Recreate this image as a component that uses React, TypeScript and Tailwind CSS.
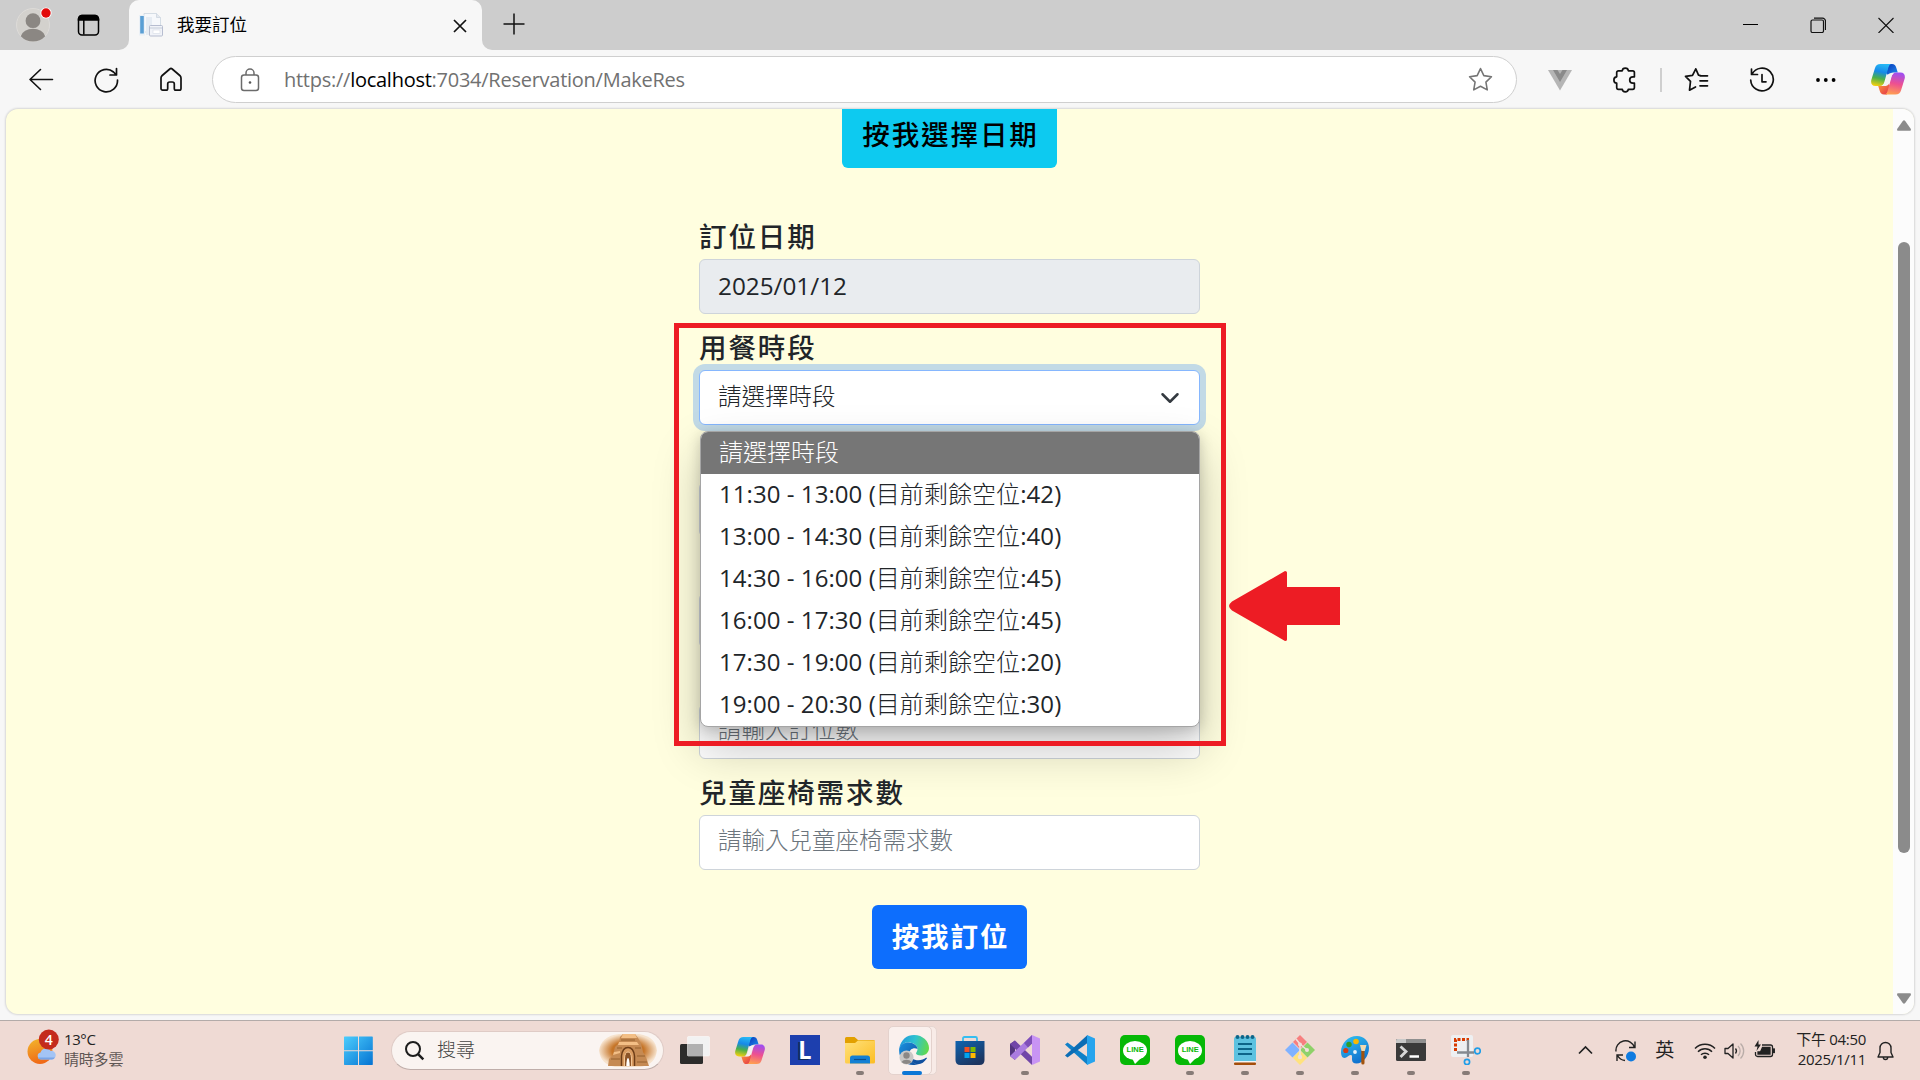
import React from "react";

const UI = "font-['Open_Sans','Noto_Sans_CJK_TC',sans-serif]";

function Copilot({ size, id }: { size: number; id: string }) {
  return (
    <svg width={size} height={size * 0.9} viewBox="0 0 34 30.6">
      <defs>
        <linearGradient id={id + "a"} x1="0.5" y1="0" x2="0.3" y2="1">
          <stop offset="0" stopColor="#26b8f5" />
          <stop offset="0.35" stopColor="#1789e8" />
          <stop offset="0.65" stopColor="#4bb04a" />
          <stop offset="1" stopColor="#f3cf10" />
        </linearGradient>
        <linearGradient id={id + "b"} x1="0.6" y1="0" x2="0.4" y2="1">
          <stop offset="0" stopColor="#a04ef0" />
          <stop offset="0.5" stopColor="#ee5090" />
          <stop offset="1" stopColor="#ffa050" />
        </linearGradient>
        <linearGradient id={id + "c"} x1="0" y1="0" x2="1" y2="1">
          <stop offset="0" stopColor="#0a35b8" />
          <stop offset="1" stopColor="#1e90f0" />
        </linearGradient>
        <linearGradient id={id + "d"} x1="0" y1="0" x2="1" y2="1">
          <stop offset="0" stopColor="#ff9a3c" />
          <stop offset="1" stopColor="#e22f4a" />
        </linearGradient>
      </defs>
      <path d="M18 0h3c2.500 0 3.500 1.200 4.200 3.500l1.600 5h-4.300c-2.500 0-4 1-5 3L15 9z" fill={`url(#${id}c)`} />
      <path d="M16 30.600h-3c-2.500 0-3.500-1.200-4.200-3.500L7.200 22h4.300c2.500 0 4-1 5-3L19 21.600z" fill={`url(#${id}d)`} />
      <path d="M9.500 0H21c-2 0-3 1.500-3.600 3.500L13.500 17.500c-.8 2.800-2 4.500-5 4.500H4.500C.8 22-.4 19.300.3 16L4 4C4.800 1.400 6.500 0 9.500 0z" fill={`url(#${id}a)`} />
      <path d="M24.500 30.600H13c2 0 3-1.500 3.600-3.500L20.500 13.100c.8-2.800 2-4.500 5-4.500h4c3.700 0 4.900 2.700 4.200 6L30 26.600c-.8 2.600-2.500 4-5.500 4z" fill={`url(#${id}b)`} />
      <path d="M18.500 9.500h4l-1.500 1.500q-.7 1-1.200 2.700L18.200 19q-.9 3-3.200 3h-3.500l1.500-1.500q.8-1 1.200-2.600l1.600-5.400q.8-2.600 2.700-3z" fill="#f5f1f2" />
    </svg>
  );
}

function TabStrip() {
  return (
    <div className="flex h-[50px] bg-[#cdcdcd]">
      <div className="flex w-[119px] items-center pl-4">
        <svg width="36" height="50" viewBox="0 0 36 50">
          <circle cx="17" cy="25" r="16.500" fill="#d3d1cd" stroke="#dddbd8" />
          <circle cx="17" cy="20.700" r="7.400" fill="#8b8783" />
          <path d="M4.800 36.200a12.500 9.500 0 0 1 24.400 0A16.500 16.500 0 0 1 4.800 36.200z" fill="#8b8783" />
          <circle cx="30" cy="13" r="5.600" fill="#fff" />
          <circle cx="30" cy="13" r="4.700" fill="#e30b0b" />
        </svg>
        <svg className="ml-[24px]" width="24" height="24" viewBox="0 0 24 24" fill="none" stroke="#000" strokeWidth="1.500">
          <rect x="2.500" y="2.500" width="20" height="19.500" rx="3.500" />
          <path d="M2.500 7V6A3.500 3.500 0 0 1 6 2.500h13A3.500 3.500 0 0 1 22.500 6v1z" fill="#000" />
          <path d="M7.800 7v14.500" />
        </svg>
      </div>
      <svg className="mt-auto" width="10" height="10"><path d="M10 0A10 10 0 0 1 0 10h10z" fill="#f7f7f7" /></svg>
      <div className="flex w-[353px] items-center rounded-t-[10px] bg-[#f7f7f7] pl-[9px] pr-3">
        <svg width="26" height="26" viewBox="0 0 26 26">
          <path d="M6 1.500h12.500l4 4V20H6z" fill="#f6f8fb" stroke="#cdd6e0" strokeWidth=".8" />
          <path d="M18.500 1.500v4h4" fill="#e3e8ee" stroke="#cdd6e0" strokeWidth=".8" />
          <rect x="1" y="3" width="6" height="20.500" fill="#eaf0f6" />
          <rect x="2.200" y="4" width="3.600" height="17.500" fill="#5a9fd4" />
          <path d="M8 5h6v18H8z" fill="#e6ecf3" />
          <rect x="11.500" y="13.500" width="13" height="10.500" rx="1" fill="#f1f3f8" stroke="#b0b7cb" strokeWidth=".9" />
          <path d="M12 16h12" stroke="#c3cbd8" />
          <rect x="15" y="18" width="7" height="3.500" fill="#fff" stroke="#d5dae4" strokeWidth=".6" />
        </svg>
        <span className={`ml-[13px] pb-[1px] text-[17.500px] leading-none text-black ${UI}`}>我要訂位</span>
        <svg className="ml-auto mt-[2px]" width="20" height="20" viewBox="0 0 20 20" stroke="#111" strokeWidth="1.700"><path d="M4 4l12 12M16 4L4 16" /></svg>
      </div>
      <svg className="mt-auto" width="10" height="10"><path d="M0 0A10 10 0 0 0 10 10H0z" fill="#f7f7f7" /></svg>
      <svg className="ml-[11px] mt-[13px]" width="22" height="22" viewBox="0 0 22 22" stroke="#111" strokeWidth="1.500"><path d="M11 .5v21M.5 11h21" /></svg>
      <div className="ml-auto flex w-[178px] items-start justify-between pl-[1px] pr-[26px] pt-[17px]">
        <svg width="15" height="16" viewBox="0 0 15 16"><path d="M0 7.500h15" stroke="#000" /></svg>
        <svg width="16" height="16" viewBox="0 0 16 16" fill="none" stroke="#111" strokeWidth="1.200">
          <rect x="1" y="3" width="12.500" height="12.500" rx="1.500" />
          <path d="M4 1.200h8.500a3 3 0 0 1 3 3V13" />
        </svg>
        <svg width="16" height="16" viewBox="0 0 16 16" stroke="#111" strokeWidth="1.100"><path d="M.5 1l15 15M15.500 1l-15 15" /></svg>
      </div>
    </div>
  );
}

function Toolbar() {
  return (
    <div className="flex h-[59px] items-center bg-[#f7f7f7]">
      <svg className="ml-7" width="26" height="26" viewBox="0 0 26 26" fill="none" stroke="#111" strokeWidth="1.600" strokeLinecap="round" strokeLinejoin="round">
        <path d="M12.500 2.500L2 12.500l10.500 10M2 12.500h22.500" />
      </svg>
      <svg className="ml-[39px]" width="26" height="26" viewBox="0 0 26 26" fill="none" stroke="#111" strokeWidth="1.700" strokeLinecap="round" strokeLinejoin="round">
        <path d="M24.500 13A11.200 11.200 0 1 1 20.500 5l2.800 2.800M23.500 1.500v6.500H17" />
      </svg>
      <svg className="ml-[40px]" width="24" height="28" viewBox="0 0 24 28" fill="none" stroke="#111" strokeWidth="1.700" strokeLinejoin="round">
        <path d="M2 12c0-1 .4-1.800 1.200-2.500l7.600-6.500c.7-.6 1.700-.6 2.400 0l7.600 6.500c.8.700 1.200 1.500 1.200 2.500v10.500c0 1-.7 1.700-1.700 1.700h-3.400c-1 0-1.600-.7-1.600-1.700V18a2 2 0 0 0-2-2h-2.600a2 2 0 0 0-2 2v4.500c0 1-.6 1.700-1.600 1.700H3.700C2.700 24.200 2 23.500 2 22.500z" />
      </svg>
      <div className="ml-[29px] flex h-[47px] w-[1305px] items-center rounded-full border-[1.500px] border-[#cfcfcf] bg-white pl-[27px] pr-[23px]">
        <svg width="20" height="24" viewBox="0 0 20 24" fill="none" stroke="#6b6b6b" strokeWidth="1.500">
          <rect x="1.500" y="7" width="17" height="15.500" rx="2.500" />
          <path d="M6 7V5a4 4 0 0 1 8 0v2" />
          <circle cx="10" cy="14.500" r="1.300" fill="#555" stroke="none" />
        </svg>
        <span className={`ml-[24px] text-[20px] leading-none tracking-[-0.260px] text-[#717171] ${UI}`}>
          https://<span className="text-black">localhost</span>:7034/Reservation/MakeRes
        </span>
        <svg className="ml-auto" width="25" height="25" viewBox="0 0 24 24" fill="none" stroke="#757575" strokeWidth="1.500" strokeLinejoin="round">
          <path d="M12 1.500l3.200 6.800 7.300 1-5.300 5.200 1.300 7.500L12 18.500 5.500 22l1.300-7.500L1.500 9.300l7.300-1z" />
        </svg>
      </div>
      <svg className="ml-[31px]" width="24" height="22" viewBox="0 0 24 22">
        <path d="M0 1h24L12 21.500z" fill="#b5b5b5" />
        <path d="M5 1h4.500L12 5l2.500-4H19l-7 12z" fill="#8a8a8a" />
      </svg>
      <svg className="ml-[41px]" width="26" height="26" viewBox="0 0 26 26" fill="none" stroke="#111" strokeWidth="1.700" strokeLinejoin="round">
        <path d="M3.700 5.500A1.700 1.700 0 0 1 5.400 3.800h3.900C9.400 2.300 10.500 1.200 12.300 1.200s2.900 1.100 3 2.600h4.400c1 0 1.700.7 1.700 1.700v4.300h-1.500a3.200 3.200 0 0 0 0 6.400h1.500v4.400c0 1-.7 1.700-1.700 1.700h-4.400c-.1 1.500-1.200 2.600-3 2.600s-2.900-1.100-3-2.600H5.400c-1 0-1.700-.7-1.700-1.700v-4.400C2 16.100.9 14.900.9 13s1.100-3.100 2.800-3.200z" />
      </svg>
      <div className="ml-[21px] h-6 w-[2px] bg-[#cfcfcf]" />
      <svg className="ml-[22px]" width="25" height="25" viewBox="0 0 25 25" fill="none" stroke="#111" strokeWidth="1.700" strokeLinejoin="round" strokeLinecap="round">
        <path d="M16.500 8.500l-2-.3L11.800 1.800 8.500 8.300l-7 1 5 5-1 8.900 6-3.200M16 8.800h7.500M16 13.800h7.500M16 18.800h7.500" />
      </svg>
      <svg className="ml-[40px]" width="26" height="26" viewBox="0 0 26 26" fill="none" stroke="#111" strokeWidth="1.700" strokeLinecap="round" strokeLinejoin="round">
        <path d="M2.500 2v5.500h6M3 7.200A11.300 11.300 0 1 1 1.700 13M13 7.500v7.300h4" />
      </svg>
      <svg className="ml-[41px]" width="20" height="6" viewBox="0 0 20 6"><circle cx="2" cy="3" r="1.900" /><circle cx="9.800" cy="3" r="1.900" /><circle cx="17.600" cy="3" r="1.900" /></svg>
      <div className="ml-[35px]"><Copilot size={34} id="tb" /></div>
    </div>
  );
}

const slots = [
  { time: "11:30 - 13:00", left: 42 },
  { time: "13:00 - 14:30", left: 40 },
  { time: "14:30 - 16:00", left: 45 },
  { time: "16:00 - 17:30", left: 45 },
  { time: "17:30 - 19:00", left: 20 },
  { time: "19:00 - 20:30", left: 30 },
];

function Field({ label, children }: { label?: string; children: React.ReactNode }) {
  return (
    <div className="flex h-[111.200px] flex-col">
      <div className="flex h-[56.200px] items-center pt-[11px] text-[27.500px] font-medium leading-none tracking-[1.900px] text-[#212529]">{label}</div>
      {children}
    </div>
  );
}

const box = "flex h-[55px] items-center rounded-[6px] border pb-[2px] pl-[18px] pr-[19px] text-[23.500px] leading-none";

function Page() {
  return (
    <div className="relative mx-[6px] flex h-[905px] overflow-hidden rounded-[12px] bg-[#fffedf] shadow-[0_0_2px_1px_rgba(0,0,0,0.13)]">
      <div className={`flex flex-1 flex-col items-center ${UI}`}>
        <div className="flex h-[59px] w-[215px] items-center justify-center rounded-b-[6px] bg-[#0dcaf0] pb-[8px] pl-[2px] text-[27.500px] font-medium leading-none tracking-[1.900px] text-black">
          按我選擇日期
        </div>
        <div className="mt-[35px] w-[501px]">
          <Field label="訂位日期"><div className={`${box} border-[#ced4da] bg-[#e9ecef] text-[#212529]`}><span className="text-[24.300px]">2025/01/12</span></div></Field>
          <Field label="用餐時段">
            <div className={`${box} justify-between border-[#86b7fe] bg-white font-light text-[#212529] shadow-[0_0_0_6px_rgba(13,110,253,0.25)]`}>
              請選擇時段
              <svg className="mt-[2px]" width="20" height="20" viewBox="0 0 16 16" fill="none" stroke="#343a40" strokeWidth="2" strokeLinecap="round" strokeLinejoin="round"><path d="M2 5l6 6 6-6" /></svg>
            </div>
          </Field>
          <Field><div className={`${box} border-[#ced4da] bg-white`} /></Field>
          <Field><div className={`${box} border-[#ced4da] bg-white`} /></Field>
          <Field><div className={`${box} border-[#ced4da] bg-white pb-[4px] font-light text-[#6c757d]`}>請輸入訂位數</div></Field>
          <div className="relative z-20">
            <Field label="兒童座椅需求數"><div className={`${box} border-[#ced4da] bg-white pb-[3px] font-light text-[#6c757d]`}>請輸入兒童座椅需求數</div></Field>
          </div>
        </div>
        <div className="mt-[35px] flex h-[64px] w-[155px] items-center justify-center rounded-[6px] bg-[#0d6efd] pl-[2px] text-[27.500px] font-bold leading-none tracking-[1.900px] text-white">
          按我訂位
        </div>
      </div>
      <div className="flex w-[21px] flex-col items-center bg-[#fcfcfc]">
        <svg className="mt-[11px]" width="14" height="11" viewBox="0 0 14 11"><path d="M5.800 1a1.500 1.500 0 0 1 2.400 0l5.500 7.800c.6 1 .1 2-1 2H1.300c-1.100 0-1.600-1-1-2z" fill="#8b8b8b" /></svg>
        <div className="mt-[111px] h-[611px] w-3 rounded-full bg-[#8b8b8b]" />
        <svg className="mb-[10px] mt-auto" width="14" height="11" viewBox="0 0 14 11"><path d="M5.800 10a1.500 1.500 0 0 0 2.400 0l5.500-7.800c.6-1 .1-2-1-2H1.300c-1.100 0-1.600 1-1 2z" fill="#8b8b8b" /></svg>
      </div>

      <div className={`absolute left-[694px] top-[322px] z-10 h-[296px] w-[500px] rounded-[8px] border border-[#a5a5a5] bg-white text-[24px] leading-none text-[#212529] shadow-[0_22px_48px_rgba(0,0,0,0.22),0_3px_14px_rgba(0,0,0,0.18)] ${UI}`}>
        <div className="flex h-[42px] items-center rounded-t-[7px] bg-[#767676] pb-[2px] pl-[18px] font-light text-white">請選擇時段</div>
        {slots.map((s) => (
          <div key={s.time} className="flex h-[42px] items-center whitespace-pre pb-[3px] pl-[18px] tracking-[0.060px]">
            {s.time} (<span className="pt-[1px] font-light">目前剩餘空位</span>:{s.left})
          </div>
        ))}
      </div>
      <div className="absolute left-[668px] top-[214px] z-30 h-[423px] w-[552px] border-[5px] border-[#ed1c24]" />
      <svg className="absolute left-[1223px] top-[462px] z-30" width="111" height="70" viewBox="0 0 111 70"><path d="M0 35q0-2 3-4.500L56 0q2 0 2 1.500V16h53v38H58v14.500q0 1.500-2 1.500L3 39.500Q0 37 0 35z" fill="#ed1c24" /></svg>
    </div>
  );
}

function Cell({ children, run }: { children: React.ReactNode; run?: boolean }) {
  return (
    <div className="relative flex h-[59px] w-[55.080px] shrink-0 items-center justify-center pb-[1px]">
      {children}
      {run && <span className="absolute bottom-[5px] h-[4px] w-2 rounded-full bg-[#877b77]" />}
    </div>
  );
}

function Line() {
  return (
    <div className="flex h-[30px] w-[30px] items-center justify-center rounded-[5px] bg-[#06b806]">
      <div className="relative flex h-[19px] w-[24px] items-center justify-center rounded-[50%] bg-white">
        <span className="font-['Liberation_Sans',sans-serif] text-[7.500px] font-bold leading-none text-[#06b806]">LINE</span>
        <svg className="absolute left-[9px] top-[17px]" width="9" height="7"><path d="M0 0h9L3 6z" fill="#fff" /></svg>
      </div>
    </div>
  );
}

function Taskbar() {
  return (
    <div className={`flex h-[60px] items-center border-t border-[#b3aba9] bg-[#efdad4] ${UI}`}>
      <div className="flex w-[344px] items-center pl-[26px]">
        <svg className="mb-[5px]" width="34" height="38" viewBox="0 0 34 38">
          <defs><linearGradient id="sun" x1="0" y1="0" x2="0.300" y2="1"><stop offset="0" stopColor="#f2b72c" /><stop offset="1" stopColor="#f06a17" /></linearGradient></defs>
          <circle cx="14" cy="22.500" r="12.500" fill="url(#sun)" />
          <path d="M15 30.500a3.600 3.600 0 0 1-.5-7.100 5.800 5.800 0 0 1 10.300-1.500 4.300 4.300 0 0 1 1.200 8.600z" fill="#a3c4f5" />
          <path d="M12 28.500h17a4 4 0 0 1-3 2H15a4 4 0 0 1-3-2z" fill="#7aa5e8" />
          <circle cx="22.800" cy="10.500" r="10" fill="#c42b1c" />
          <text x="22.800" y="15.500" textAnchor="middle" fontSize="14" fill="#fff" fontWeight="600">4</text>
        </svg>
        <div className="mb-[3px] ml-[4px] text-[15px] leading-[20px]">
          <div className="tracking-[-0.400px] text-[#222]">13°C</div>
          <div className="tracking-[-0.200px] text-[#5f5754]">晴時多雲</div>
        </div>
      </div>
      <svg width="30" height="30" viewBox="0 0 30 30">
        <defs><linearGradient id="win" x1="0" y1="0" x2="1" y2="1"><stop offset="0" stopColor="#4ccdfd" /><stop offset="1" stopColor="#0573d2" /></linearGradient></defs>
        <path d="M.5.5H14v13.700H0V1zM15 .5h13.300l.5.500v13.200H15zM0 15.200h14V29H.5l-.5-.5zM15 15.200h13.800v13.300l-.5.500H15z" fill="url(#win)" />
      </svg>
      <div className="ml-[17px] flex h-[39px] w-[273px] items-center rounded-full border border-[#dfcbc6] border-b-[#bfaeaa] bg-[#faf4f1] pl-[13px] pr-[6px]">
        <svg width="20" height="20" viewBox="0 0 20 20" fill="none" stroke="#1d1d1d" strokeWidth="2"><circle cx="8" cy="8" r="7" /><path d="M12.800 12.800l5.500 5.500" strokeWidth="2.500" /></svg>
        <span className="ml-[12px] text-[19px] font-light leading-none text-[#444]">搜尋</span>
        <svg className="ml-auto" width="58" height="33" viewBox="0 0 58 33">
          <defs><radialGradient id="glow"><stop offset="0.550" stopColor="#c67528" /><stop offset="1" stopColor="#f6e2cc" /></radialGradient></defs>
          <path d="M20 0h20c12 2 17 8 18 16.500C57 25 52 31 42 33H16C6 31 1 25 0 16.500 1 8 8 1 20 0z" fill="url(#glow)" />
          <path d="M24 0h12l3 4 3 5 2 9 3 5 3 9H35l-2-8q-4-8-8 0l-2 8H9l1-7 4-4 2-8 4-4 1-6z" fill="#c58a53" />
          <path d="M24 0h12l2 4H22zM20 8h18l2 3H19zM15 18l6-1v2l-7 2z" fill="#f3bf86" />
          <path d="M22 6h14M18 14h5M36 14h6M12 25h9M38 22h8M38 28h10" stroke="#94602f" />
          <path d="M22.500 32V22q1-8.500 6.500-8.500T35.500 22v10" fill="#d99b60" stroke="#6d3d17" strokeWidth="1.500" />
          <path d="M25.500 32v-8q.5-6 3.500-6t3.500 6v8" fill="#8c5427" stroke="#f3c694" />
          <path d="M27.300 32q.3-8 1.700-8t1.700 8z" fill="#fff" />
        </svg>
      </div>
      <div className="ml-[3px] flex">
        <Cell>
          <svg width="30" height="30" viewBox="0 0 30 30"><rect x="0" y="9" width="23" height="20" rx="1.500" fill="#2c2c2b" /><rect x="7.500" y="1.500" width="22" height="19.500" rx="1" fill="#f2f2f2" stroke="#fff" strokeWidth=".5" /><path d="M7.500 9H23v12H7.500z" fill="#b1b1b1" /></svg>
        </Cell>
        <Cell><Copilot size={30} id="tk" /></Cell>
        <Cell>
          <div className="flex h-[30px] w-[30px] items-center justify-center bg-[#1d3fae] font-['Lato',sans-serif] text-[24px] font-black leading-none text-white [text-shadow:-2px_1px_0_#0e2a5c]">L</div>
        </Cell>
        <Cell run>
          <svg width="30" height="28" viewBox="0 0 30 28">
            <defs><linearGradient id="fold" x1="0" y1="0" x2="1" y2="1"><stop offset="0" stopColor="#ffe17c" /><stop offset="1" stopColor="#fcbd22" /></linearGradient></defs>
            <path d="M0 2.500Q0 1 1.500 1h8L13 4h15.500Q30 4 30 5.500V12H0z" fill="#e2a000" />
            <path d="M0 7h10l3-2.500h17V26q0 1.500-1.500 1.500h-27Q0 27.500 0 26z" fill="url(#fold)" />
            <path d="M5 27.500V22q0-2.500 2.500-2.500h15q2.500 0 2.500 2.500v5.500z" fill="#1480d4" /><path d="M9 23.500h12" stroke="#0b4f8f" strokeWidth="1.200" />
          </svg>
        </Cell>
        <div className="relative flex h-[59px] w-[55.080px] shrink-0 items-center justify-center pb-[1px]">
          <div className="absolute left-[6px] top-[5px] h-[49px] w-[44px] rounded-[5px] border border-[#e6d6d1] bg-[#f8ebe7]" />
          <div className="absolute left-[1px] top-[5px] h-[49px] w-[44px] rounded-[5px] border border-[#e4d2cd] bg-[#faf0ed]" />
          <svg className="z-10 -ml-[1px]" width="30" height="30" viewBox="0 0 30 30">
            <defs>
              <linearGradient id="edg" x1="0" y1="0.300" x2="1" y2="0.500"><stop offset="0" stopColor="#1f97dd" /><stop offset="0.500" stopColor="#2fc3cf" /><stop offset="1" stopColor="#62d94c" /></linearGradient>
              <linearGradient id="edb" x1="0" y1="0" x2="1" y2="1"><stop offset="0" stopColor="#1b92e0" /><stop offset="1" stopColor="#0c4b9c" /></linearGradient>
            </defs>
            <path d="M.3 13C2 4.500 8 0 15 0c9 0 15 6.500 15 13 0 5-4 7.500-8 7.500-3.500 0-5-1.200-5-2.200 0-.8 1.500-1.800 1.500-4.300C18.500 10 14 7.500 9.500 7.500 5 7.500 2 9.500.3 13z" fill="url(#edg)" />
            <path d="M.2 13.500C1.500 9.500 5 7.500 9.500 7.500c5 0 9 3 9 6.500-3-2-8.500-.5-8.500 5.500 0 5 4 9.500 9 9.500-1.500.7-3 1-5 1C6 30-.8 23.500.2 13.500z" fill="url(#edb)" />
            <path d="M10 18.500c0 4.500 4.500 6.800 9.500 6.800 3 0 5.500-1 7.500-2.500.7-.4 1.200.1.800.8C25.500 27 22.500 29.300 19 29.300c-5 0-9-5-9-10.800z" fill="#11519f" />
            <circle cx="7.500" cy="22.500" r="7" fill="#c8c7c6" /><circle cx="7.500" cy="20.500" r="3.200" fill="#8a8785" /><path d="M2.500 27a5.500 3.800 0 0 1 10 0 7 7 0 0 1-10 0z" fill="#8a8785" />
          </svg>
          <span className="absolute bottom-[5px] left-[15px] h-[4px] w-5 rounded-full bg-[#0b77d6]" />
        </div>
        <Cell>
          <svg width="30" height="30" viewBox="0 0 30 30">
            <defs><linearGradient id="sto" x1="0" y1="0" x2="0.600" y2="1"><stop offset="0" stopColor="#0f64b0" /><stop offset="1" stopColor="#1c3560" /></linearGradient></defs>
            <path d="M8 8V3.500Q8 2 9.500 2h11Q22 2 22 3.500V8" fill="none" stroke="#35bdf0" strokeWidth="1.800" />
            <path d="M.5 6h29v19q0 5-5 5h-19q-5 0-5-5z" fill="url(#sto)" />
            <path d="M9.500 12h5v5h-5z" fill="#f25022" /><path d="M15.500 12h5v5h-5z" fill="#7fba00" /><path d="M9.500 18h5v5h-5z" fill="#00a4ef" /><path d="M15.500 18h5v5h-5z" fill="#ffb900" />
          </svg>
        </Cell>
        <Cell run>
          <svg width="30" height="30" viewBox="0 0 30 30">
            <path d="M0 9l5-3.500V25L0 21z" fill="#53357f" />
            <path d="M5 5.500l17 16.200V30L0 9z" fill="#7146a8" />
            <path d="M22 0v8.500L5 25 0 21z" fill="#ab7ce0" />
            <path d="M14 8l8-8v8.500l-4 4z" fill="#7f50b8" />
            <path d="M22 0l8 3.500v23L22 30z" fill="#c894f4" />
          </svg>
        </Cell>
        <Cell>
          <svg width="30" height="30" viewBox="0 0 30 30">
            <path d="M0 9.500L2.500 7.500 22.500 22v8z" fill="#1080c8" /><path d="M0 20.500L22.500 0v8L2.500 22.500z" fill="#0b6db5" /><path d="M22 0l8 3.500v23L22 30z" fill="#26a4ee" />
          </svg>
        </Cell>
        <Cell><Line /></Cell>
        <Cell run><Line /></Cell>
        <Cell run>
          <svg width="24" height="30" viewBox="0 0 24 30">
            <rect x="1" y="2" width="22" height="25" rx="1.500" fill="#5ec2e0" /><rect x="1" y="26" width="22" height="1.500" fill="#f5f5f5" /><rect x="1" y="27.500" width="22" height="2.500" rx="1" fill="#a34d0b" />
            <path d="M5 9h14M5 14h14M5 19h14" stroke="#0d6589" strokeWidth="1.800" />
            <g fill="#0d6589"><circle cx="4.500" cy="2" r="2" /><circle cx="9.500" cy="2" r="2" /><circle cx="14.500" cy="2" r="2" /><circle cx="19.500" cy="2" r="2" /></g>
          </svg>
        </Cell>
        <Cell run>
          <svg width="30" height="30" viewBox="0 0 30 30">
            <path d="M15 0l7 7-7 7-7-7z" fill="#f77f7f" /><path d="M22.500 7.500L30 15l-7.500 7.500L15 15z" fill="#8ed169" /><path d="M7.500 7.500L15 15l-7.500 7.500L0 15z" fill="#80b2ff" /><path d="M15 15.500l7.200 7.200L15 30l-7.200-7.300z" fill="#ffe27d" />
            <path d="M11 4l4 5v13M15 9l7 6" stroke="#f0e0dc" strokeWidth="1.600" fill="none" />
            <g fill="#f0e0dc"><circle cx="15" cy="9.500" r="2" /><circle cx="22" cy="15" r="2" /><circle cx="15" cy="22" r="2.200" /></g>
          </svg>
        </Cell>
        <Cell run>
          <svg width="30" height="30" viewBox="0 0 30 30">
            <defs><linearGradient id="pal" x1="0" y1="0" x2="0.500" y2="1"><stop offset="0" stopColor="#33c4f2" /><stop offset="1" stopColor="#1173cf" /></linearGradient></defs>
            <path d="M17 1c7 0 12 5 12 12 0 8-6 15.500-12.500 15.500-3 0-4.500-1.500-4.500-4 0-3 .5-4.500-1.500-4.500S7 23 4.500 23 1 20 1 17C1 8.500 8 1 17 1z" fill="url(#pal)" />
            <circle cx="9" cy="9.500" r="2.700" fill="#2f9c28" /><circle cx="16" cy="6.500" r="2.800" fill="#f6b800" /><circle cx="5.800" cy="15.500" r="2.600" fill="#d23c14" /><circle cx="15" cy="17" r="1.900" fill="#e6f2f8" />
            <path d="M21.300 15h3.200v13q0 1.500-1.600 1.500T21.300 28z" fill="#a2530e" /><path d="M20 10h6.500l-1.700 6h-3.300z" fill="#f0d9b0" />
          </svg>
        </Cell>
        <Cell run>
          <svg width="30" height="24" viewBox="0 0 30 24">
            <rect y="1" width="30" height="22" rx="1.500" fill="#3a3a3a" /><path d="M0 5V2.500Q0 1 1.500 1h27Q30 1 30 2.500V5z" fill="#8f8f8f" /><path d="M0 5V2.500Q0 1 1.500 1H10v4z" fill="#c9c9c9" />
            <path d="M4.500 8.500l5.500 5-5.500 5.500" fill="none" stroke="#d6d6d6" strokeWidth="2.800" /><path d="M13.500 18.500H23" stroke="#fff" strokeWidth="2.500" />
          </svg>
        </Cell>
        <Cell run>
          <svg width="30" height="30" viewBox="0 0 30 30">
            <rect x="0" y="0" width="22" height="22" rx="2" fill="#eef0f2" />
            <path d="M4.500 16V4.500H18" fill="none" stroke="#d83b01" strokeWidth="3" strokeDasharray="3 1.500" />
            <path d="M17 5v17M6 17.500h17" stroke="#858a90" strokeWidth="2.300" />
            <circle cx="26.500" cy="16" r="2.800" fill="none" stroke="#209ee8" strokeWidth="1.700" /><circle cx="16" cy="27" r="2.600" fill="none" stroke="#209ee8" strokeWidth="1.700" />
          </svg>
        </Cell>
      </div>
      <div className="ml-auto flex items-center pr-[26px]">
        <svg className="mb-[2px]" width="15" height="10" viewBox="0 0 15 10" fill="none" stroke="#222" strokeWidth="1.700"><path d="M1 8.500l6.500-6.500L14 8.500" /></svg>
        <svg className="ml-[22px]" width="22" height="22" viewBox="0 0 22 22" fill="none" stroke="#222" strokeWidth="1.400"><path d="M1 11.500a9.500 9.500 0 0 1 18.500-4M20 1.500v6h-6M10 20.500a9.500 9.500 0 0 1-7.500-5M2 21v-6h6" /><circle cx="16" cy="16.500" r="5" fill="#0f7be0" stroke="none" /></svg>
        <span className="ml-[18px] text-[19px] leading-none text-[#222]">英</span>
        <svg className="ml-[20px]" width="22" height="18" viewBox="0 0 22 18" fill="none" stroke="#222" strokeWidth="1.500"><path d="M1 6.500a14 14 0 0 1 20 0M4 9.800a9.800 9.800 0 0 1 14 0M7 12.800a5.700 5.700 0 0 1 8 0" /><circle cx="11" cy="15.300" r="1.800" fill="#222" stroke="none" /></svg>
        <svg className="ml-[8px]" width="21" height="18" viewBox="0 0 21 18" fill="none" stroke="#222" strokeWidth="1.300" strokeLinejoin="round"><path d="M1 6.500v5h3l5 4.500V2L4 6.500zM11.500 6.500a4 4 0 0 1 0 5" /><path d="M14 4a7 7 0 0 1 0 10M16.500 1.500a10.500 10.500 0 0 1 0 15" stroke="#b9aca8" /></svg>
        <svg className="mb-[2px] ml-[9px]" width="22" height="20" viewBox="0 0 22 20" fill="none" stroke="#222" strokeWidth="1.300"><path d="M8 5h8.500a2 2 0 0 1 2 2v7.500a2 2 0 0 1-2 2H3.500a2 2 0 0 1-2-2v-2.500" /><path d="M8.500 7.500h7.500v6.500H4v-2h2.500z" fill="#222" /><path d="M19 9h1.300v3.500H19z" fill="#222" /><path d="M4.500 0L.5 6.500h3L2.500 11 7 4.500H4.500z" fill="#222" stroke="none" /></svg>
        <div className="mb-[3px] ml-[20px] text-right text-[15px] leading-[20px] tracking-[-0.300px] text-[#222]">
          <div>下午 04:50</div>
          <div>2025/1/11</div>
        </div>
        <svg className="ml-[11px]" width="17" height="20" viewBox="0 0 17 20" fill="none" stroke="#222" strokeWidth="1.400" strokeLinejoin="round"><path d="M8.500 1.500a5.500 5.500 0 0 1 5.500 5.500v4.500l2 4.500H1l2-4.500V7a5.500 5.500 0 0 1 5.500-5.500zM6.300 16.300a2.200 2.200 0 0 0 4.400 0" /></svg>
      </div>
    </div>
  );
}

export default function App() {
  return (
    <div className="h-[1080px] w-[1920px] overflow-hidden bg-[#f7f7f7]">
      <TabStrip />
      <Toolbar />
      <Page />
      <div className="h-[6px]" />
      <Taskbar />
    </div>
  );
}
